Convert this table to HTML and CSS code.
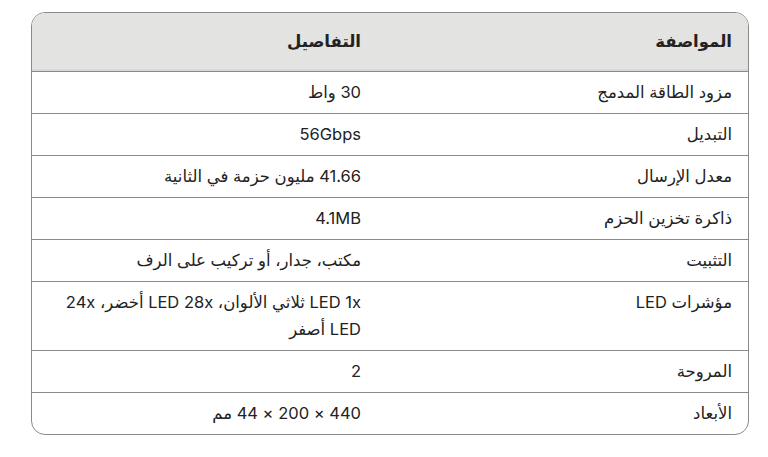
FILE: index.html
```html
<!DOCTYPE html>
<html lang="ar" dir="rtl">
<head>
<meta charset="utf-8">
<link rel="stylesheet" href="styles.css">
</head>
<body>
<div class="wrap">
  <table class="spec">
    <thead>
      <tr><th class="c1">المواصفة</th><th class="c2">التفاصيل</th></tr>
    </thead>
    <tbody>
      <tr><td>مزود الطاقة المدمج</td><td>30 واط</td></tr>
      <tr><td>التبديل</td><td>56Gbps</td></tr>
      <tr><td>معدل الإرسال</td><td>41.66 مليون حزمة في الثانية</td></tr>
      <tr><td>ذاكرة تخزين الحزم</td><td>4.1MB</td></tr>
      <tr><td>التثبيت</td><td>مكتب، جدار، أو تركيب على الرف</td></tr>
      <tr><td>مؤشرات LED</td><td>LED 1x ثلاثي الألوان، LED 28x أخضر، 24x LED أصفر</td></tr>
      <tr><td>المروحة</td><td>2</td></tr>
      <tr><td>الأبعاد</td><td>440 × 200 × 44 مم</td></tr>
    </tbody>
  </table>
</div>
</body>
</html>
```

FILE: styles.css
```css
html, body {
  margin: 0;
  padding: 0;
  background: #fff;
}
body {
  font-family: "Inter", "Noto Sans", "DejaVu Sans", sans-serif;
  color: #222;
}
.wrap {
  padding: 12px 19px 0 31px;
  direction: ltr;
}
.spec {
  direction: rtl;
  width: 718px;
  border: 1px solid #8a8a8a;
  border-radius: 14px;
  border-spacing: 0;
  border-collapse: separate;
  overflow: hidden;
  font-size: 16.5px;
  line-height: 27px;
}
.spec th {
  background: #e3e4e2;
  text-align: right;
  font-weight: 600;
  padding: 15px 16px 16px;
  border-bottom: 1px solid #8a8a8a;
  box-shadow: inset 0 -2px 0 #d8d9d7;
}
.spec th.c1 {
  width: 339px;
}
.spec td {
  text-align: right;
  vertical-align: top;
  padding: 7px 16px;
  border-bottom: 1px solid #8a8a8a;
}
.spec tr:last-child td {
  border-bottom: none;
}
```
